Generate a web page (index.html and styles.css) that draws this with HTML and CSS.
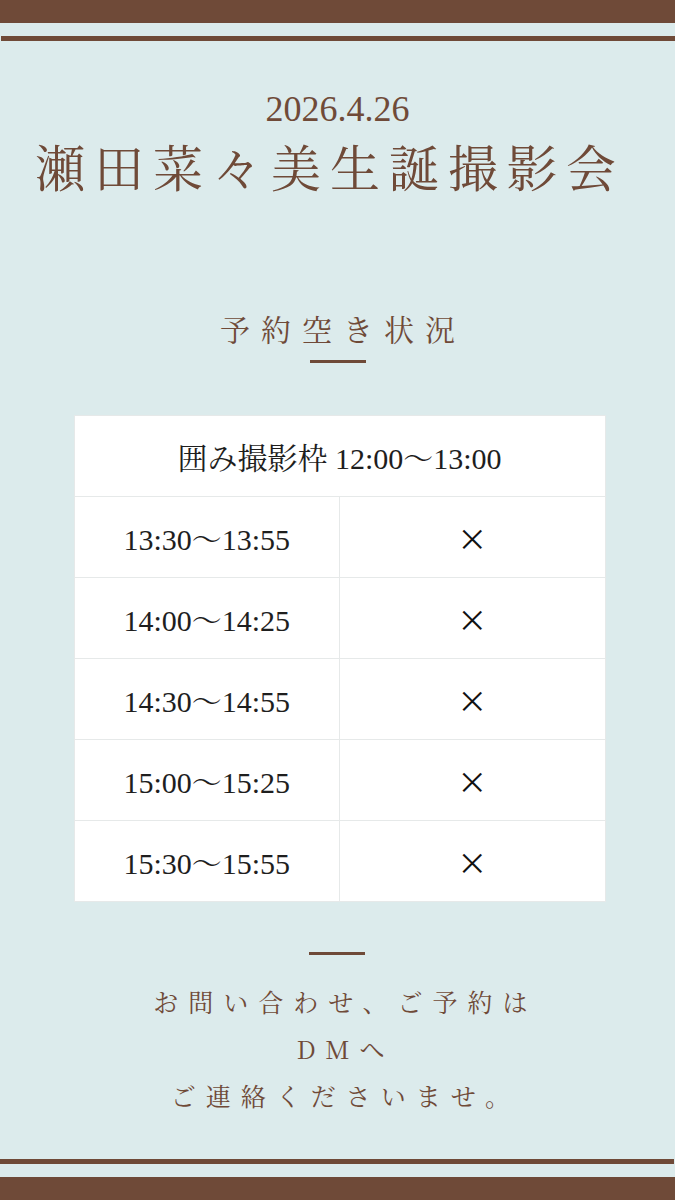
FILE: index.html
```html
<!DOCTYPE html>
<html lang="ja">
<head>
	<meta charset="UTF-8">
	<meta name="viewport" content="width=device-width, initial-scale=1.0">
	<title>瀬田菜々美生誕撮影会</title>
	<link rel="stylesheet" href="styles.css">
</head>
<body>
<div class="page">
	<div class="band band-top"></div>
	<div class="rule rule-top"></div>

	<header class="head">
		<p class="date">2026.4.26</p>
		<h1 class="title">瀬田菜々美生誕撮影会</h1>
	</header>

	<section class="status">
		<h2 class="status-title">予約空き状況</h2>
		<span class="bar"></span>

		<table class="slots">
			<tr>
				<th colspan="2">囲み撮影枠 12:00〜13:00</th>
			</tr>
			<tr>
				<td>13:30〜13:55</td>
				<td class="mark">×</td>
			</tr>
			<tr>
				<td>14:00〜14:25</td>
				<td class="mark">×</td>
			</tr>
			<tr>
				<td>14:30〜14:55</td>
				<td class="mark">×</td>
			</tr>
			<tr>
				<td>15:00〜15:25</td>
				<td class="mark">×</td>
			</tr>
			<tr>
				<td>15:30〜15:55</td>
				<td class="mark">×</td>
			</tr>
		</table>
	</section>

	<footer class="contact">
		<span class="bar"></span>
		<p class="contact-text">お問い合わせ、ご予約は<br>DMへ<br>ご連絡くださいませ。</p>
	</footer>

	<div class="rule rule-bottom"></div>
	<div class="band band-bottom"></div>
</div>
</body>
</html>
```

FILE: styles.css
```css
* {
	box-sizing: border-box;
}
body {
	margin: 0;
	background: #dcebec;
	color: #6f4a38;
	font-family: "Liberation Serif", "Noto Serif CJK JP", "Noto Sans CJK JP", serif;
}
.page {
	display: flex;
	flex-direction: column;
	align-items: center;
	min-height: 1200px;
}
.band {
	width: 100%;
	height: 23px;
	background: #6f4a38;
}
.rule {
	height: 5px;
	background: #6f4a38;
}
.rule-top {
	width: 674px;
	margin: 13px 0 0 1px;
}
.rule-bottom {
	width: 674px;
	margin: 0 1px 13px 0;
}

.head {
	text-align: center;
	margin-top: 46px;
}
.date {
	margin: 0;
	font-size: 36px;
	line-height: 44px;
	letter-spacing: 0;
}
.title {
	margin: 2px 0 0;
	padding-right: 15px;
	font-size: 50px;
	line-height: 64px;
	font-weight: normal;
	letter-spacing: 9px;
	font-family: "Noto Serif CJK JP", "Noto Sans CJK JP", serif;
}

.status {
	display: flex;
	flex-direction: column;
	align-items: center;
	margin-top: 111px;
}
.status-title {
	margin: 0;
	padding-left: 11px;
	font-size: 30px;
	line-height: 40px;
	font-weight: normal;
	letter-spacing: 11px;
	font-family: "Noto Serif CJK JP", "Noto Sans CJK JP", serif;
}
.bar {
	display: block;
	width: 56px;
	height: 3px;
	background: #6f4a38;
}
.status .bar {
	margin-top: 12px;
}

.slots {
	margin: 52px 0 0 4px;
	width: 532px;
	border-collapse: collapse;
	background: #fff;
	color: #1e1e1e;
	font-size: 30px;
}
.slots th,
.slots td {
	height: 81px;
	border: 1px solid #e6e9e9;
	text-align: center;
	font-weight: normal;
	padding: 0;
}
.slots td {
	width: 50%;
}
.slots .mark {
	color: #111;
	font-family: "Noto Sans CJK JP", sans-serif;
	font-weight: normal;
	font-size: 30px;
}

.contact {
	display: flex;
	flex-direction: column;
	align-items: center;
	margin-top: 50px;
	margin-bottom: auto;
}
.contact-text {
	margin: 23px 0 0;
	padding-left: 16px;
	text-align: center;
	font-size: 25px;
	line-height: 47px;
	letter-spacing: 10px;
	font-family: "Noto Serif CJK JP", "Noto Sans CJK JP", serif;
}
```
